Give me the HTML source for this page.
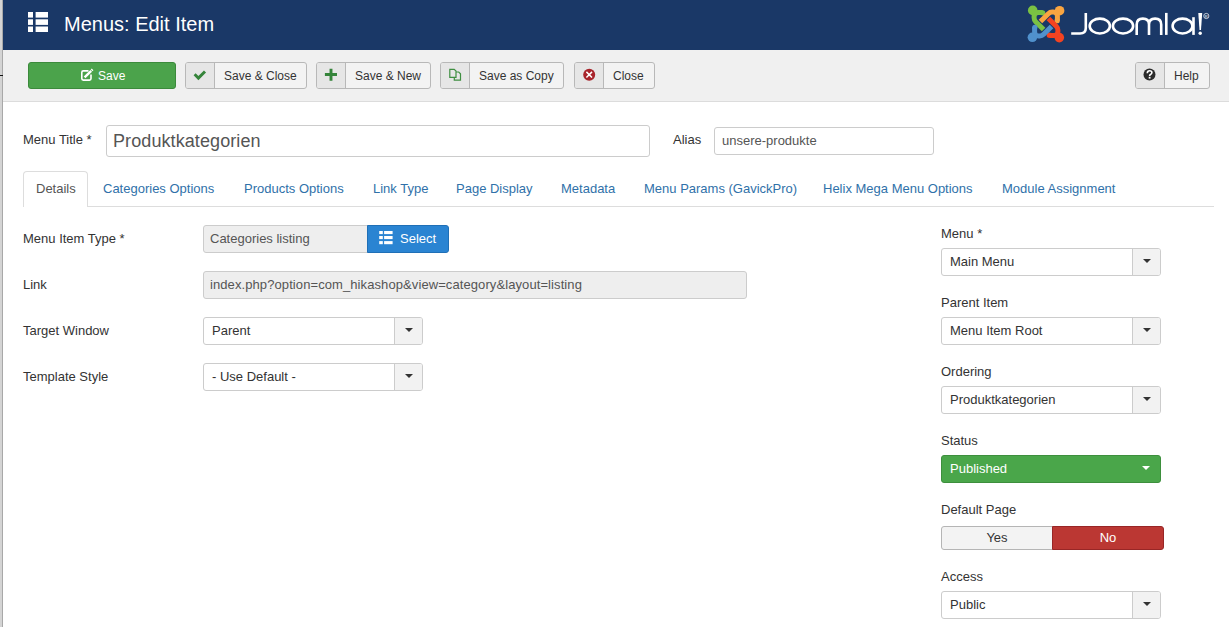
<!DOCTYPE html>
<html><head><meta charset="utf-8">
<style>
*{box-sizing:border-box;margin:0;padding:0}
html,body{width:1229px;height:627px;overflow:hidden;background:#fff;font-family:"Liberation Sans",sans-serif;color:#333}
.abs{position:absolute}
#lstrip{left:0;top:0;width:3px;height:627px;background:#d4d4d4;border-right:1px solid #a8a8a8}
#tick{left:0;top:75px;width:3px;height:1px;background:#111}
#hdr{left:3px;top:0;width:1226px;height:50px;background:#1a3867}
#hdr .title{left:61px;top:12px;font-size:20px;color:#fff;line-height:24px;white-space:nowrap}
#tb{left:3px;top:50px;width:1226px;height:52px;background:#f0f0f0;border-bottom:1px solid #dcdcdc}
.btn{position:absolute;top:62px;height:27px;border:1px solid #b8b8b8;border-radius:3px;background:#f3f3f3;font-size:12px;color:#333;line-height:25px;white-space:nowrap}
.btn .ic{position:absolute;left:0;top:0;bottom:0;width:29px;background:#e6e6e6;border-right:1px solid #b8b8b8;border-radius:2px 0 0 2px}
.btn .tx{position:absolute;top:1px}
.lbl{position:absolute;font-size:13px;color:#333;white-space:nowrap;line-height:16px}
.inp{position:absolute;border:1px solid #ccc;border-radius:3px;background:#fff;font-size:13px;color:#555;white-space:nowrap}
.sel .car{position:absolute;right:0;top:0;bottom:0;width:28px;background:#f2f2f2;border-left:1px solid #ccc;border-radius:0 2px 2px 0}
.car:after{content:"";position:absolute;left:10px;top:10px;border-left:4px solid transparent;border-right:4px solid transparent;border-top:4px solid #333}
.tab{position:absolute;top:181px;font-size:13px;color:#3071a9;white-space:nowrap;line-height:16px}
.car.w:after{border-top-color:#fff}
</style></head><body>
<div id="lstrip" class="abs"></div>
<div id="tick" class="abs"></div>
<div id="hdr" class="abs">
  <svg class="abs" style="left:25px;top:12px" width="20" height="20" viewBox="0 0 20 20">
    <rect x="0" y="0" width="5" height="5.6" fill="#fff"/><rect x="7.6" y="0" width="12.4" height="5.6" fill="#fff"/>
    <rect x="0" y="7.3" width="5" height="5.6" fill="#fff"/><rect x="7.6" y="7.3" width="12.4" height="5.6" fill="#fff"/>
    <rect x="0" y="14.5" width="5" height="5.6" fill="#fff"/><rect x="7.6" y="14.5" width="12.4" height="5.6" fill="#fff"/>
  </svg>
  <div class="title abs">Menus: Edit Item</div>
</div>
<div id="tb" class="abs"></div>

<!-- toolbar buttons -->
<div class="btn" style="left:28px;width:148px;background:#4ba34b;border-color:#3b8a3b;color:#fff">
  <svg class="abs" style="left:-1px;top:-1px" width="148" height="27" viewBox="0 0 148 27">
    <path d="M60.5,8.9 L55.3,8.9 Q53.8,8.9 53.8,10.4 L53.8,16.6 Q53.8,18.1 55.3,18.1 L61.5,18.1 Q63,18.1 63,16.6 L63,12.5" fill="none" stroke="#fff" stroke-width="1.6"/>
    <path d="M56.6,15.4 L63.2,8.8" stroke="#fff" stroke-width="2.4" stroke-linecap="butt"/>
    <path d="M63.6,8.4 L64.6,7.4" stroke="#fff" stroke-width="2.4"/>
  </svg>
  <span class="tx" style="left:69px;">Save</span>
</div>
<div class="btn" style="left:185px;width:122px"><span class="ic"></span>
  <svg class="abs" style="left:-1px;top:-1px" width="30" height="27" viewBox="0 0 30 27"><path d="M9.6,12.3 L13.4,16.1 L20,9.5" fill="none" stroke="#35843a" stroke-width="2.9"/></svg>
  <span class="tx" style="left:38px">Save &amp; Close</span></div>
<div class="btn" style="left:316px;width:115px"><span class="ic"></span>
  <svg class="abs" style="left:-1px;top:-1px" width="30" height="27" viewBox="0 0 30 27"><path d="M15,6.7 L15,18.8 M8.9,12.5 L21,12.5" fill="none" stroke="#35843a" stroke-width="2.9"/></svg>
  <span class="tx" style="left:38px">Save &amp; New</span></div>
<div class="btn" style="left:440px;width:124px"><span class="ic"></span>
  <svg class="abs" style="left:-1px;top:-1px" width="30" height="27" viewBox="0 0 30 27"><g fill="none" stroke="#3f8f41" stroke-width="1.2">
    <path d="M9.8,7.3 L14.2,7.3 L16,9.1 L16,15.3 L9.8,15.3 Z"/>
    <path d="M16,10 L18.7,10 L20.5,11.8 L20.5,18.2 L14.3,18.2 L14.3,15.3"/></g></svg>
  <span class="tx" style="left:38px">Save as Copy</span></div>
<div class="btn" style="left:574px;width:81px"><span class="ic"></span>
  <svg class="abs" style="left:-1px;top:-1px" width="30" height="27" viewBox="0 0 30 27"><circle cx="15.2" cy="12.7" r="6" fill="#a8242b"/><path d="M12.4,9.9 L18,15.5 M18,9.9 L12.4,15.5" stroke="#fff" stroke-width="1.5"/></svg>
  <span class="tx" style="left:38px">Close</span></div>
<div class="btn" style="left:1135px;width:75px"><span class="ic"></span>
  <svg class="abs" style="left:-1px;top:-1px" width="30" height="27" viewBox="0 0 30 27"><circle cx="14.5" cy="12.5" r="6" fill="#2b2b2b"/><path d="M12.3,11.2 Q12.3,8.7 14.6,8.7 Q16.9,8.7 16.9,10.6 Q16.9,11.9 15.5,12.5 Q14.6,12.9 14.6,14" fill="none" stroke="#fff" stroke-width="1.6"/><rect x="13.7" y="14.8" width="1.8" height="1.8" fill="#fff"/></svg>
  <span class="tx" style="left:38px">Help</span></div>

<!-- title row -->
<div class="lbl" style="left:23px;top:132px">Menu Title *</div>
<div class="inp" style="left:106px;top:125px;width:544px;height:32px;font-size:18px;line-height:30px;padding-left:6px;letter-spacing:0.09px">Produktkategorien</div>
<div class="lbl" style="left:673px;top:132px">Alias</div>
<div class="inp" style="left:714px;top:127px;width:220px;height:28px;line-height:26px;padding-left:7px">unsere-produkte</div>

<!-- tabs -->
<div class="abs" style="left:23px;top:206px;width:1191px;height:1px;background:#ddd"></div>
<div class="abs" style="left:23px;top:171px;width:65px;height:36px;border:1px solid #ddd;border-bottom:0;border-radius:4px 4px 0 0;background:#fff"></div>
<div class="tab" style="left:36px;color:#555">Details</div>
<div class="tab" style="left:103px">Categories Options</div>
<div class="tab" style="left:244px">Products Options</div>
<div class="tab" style="left:373px">Link Type</div>
<div class="tab" style="left:456px">Page Display</div>
<div class="tab" style="left:561px">Metadata</div>
<div class="tab" style="left:644px">Menu Params (GavickPro)</div>
<div class="tab" style="left:823px">Helix Mega Menu Options</div>
<div class="tab" style="left:1002px">Module Assignment</div>

<!-- left form -->
<div class="lbl" style="left:23px;top:231px">Menu Item Type *</div>
<div class="inp" style="left:203px;top:225px;width:165px;height:28px;line-height:26px;padding-left:6px;background:#eee;border-radius:3px 0 0 3px">Categories listing</div>
<div class="abs" style="left:367px;top:225px;width:82px;height:28px;background:#2a84d2;border:1px solid #1f6fb6;border-radius:0 3px 3px 0;color:#fff;font-size:13px;line-height:26px;padding-left:32px"><svg class="abs" style="left:11px;top:4.8px" width="14" height="14" viewBox="0 0 14 14"><g fill="#fff"><rect x="0.2" y="0" width="3.6" height="3.1"/><rect x="5.1" y="0" width="8.5" height="3.1"/><rect x="0.2" y="5" width="3.6" height="3.1"/><rect x="5.1" y="5" width="8.5" height="3.1"/><rect x="0.2" y="10.1" width="3.6" height="3.1"/><rect x="5.1" y="10.1" width="8.5" height="3.1"/></g></svg>Select</div>

<div class="lbl" style="left:23px;top:277px">Link</div>
<div class="inp" style="left:203px;top:271px;width:544px;height:28px;line-height:26px;padding-left:6px;background:#eee;letter-spacing:0.09px">index.php?option=com_hikashop&amp;view=category&amp;layout=listing</div>

<div class="lbl" style="left:23px;top:323px">Target Window</div>
<div class="inp sel" style="left:203px;top:317px;width:220px;height:28px;line-height:26px;padding-left:8px;color:#333">Parent<span class="car"></span></div>

<div class="lbl" style="left:23px;top:369px">Template Style</div>
<div class="inp sel" style="left:203px;top:363px;width:220px;height:28px;line-height:26px;padding-left:8px;color:#333">- Use Default -<span class="car"></span></div>

<!-- right column -->
<div class="lbl" style="left:941px;top:226px">Menu *</div>
<div class="inp sel" style="left:941px;top:248px;width:220px;height:28px;line-height:26px;padding-left:8px;color:#333">Main Menu<span class="car"></span></div>
<div class="lbl" style="left:941px;top:295px">Parent Item</div>
<div class="inp sel" style="left:941px;top:317px;width:220px;height:28px;line-height:26px;padding-left:8px;color:#333">Menu Item Root<span class="car"></span></div>
<div class="lbl" style="left:941px;top:364px">Ordering</div>
<div class="inp sel" style="left:941px;top:386px;width:220px;height:28px;line-height:26px;padding-left:8px;color:#333">Produktkategorien<span class="car"></span></div>
<div class="lbl" style="left:941px;top:433px">Status</div>
<div class="inp" style="left:941px;top:455px;width:220px;height:28px;line-height:26px;padding-left:8px;color:#fff;background:#4aa64a;border-color:#3d8f3d">Published<span class="car w" style="position:absolute;right:0;top:0;bottom:0;width:28px"></span></div>
<div class="lbl" style="left:941px;top:502px">Default Page</div>
<div class="abs" style="left:941px;top:526px;width:112px;height:24px;border:1px solid #b5b5b5;border-radius:3px 0 0 3px;background:#f3f3f3;font-size:13px;line-height:22px;text-align:center;color:#333">Yes</div>
<div class="abs" style="left:1052px;top:526px;width:112px;height:24px;border:1px solid #982626;border-radius:0 3px 3px 0;background:#bb3733;font-size:13px;line-height:22px;text-align:center;color:#fff">No</div>
<div class="lbl" style="left:941px;top:569px">Access</div>
<div class="inp sel" style="left:941px;top:591px;width:220px;height:28px;line-height:26px;padding-left:8px;color:#333">Public<span class="car"></span></div>

<!-- joomla logo -->
<svg class="abs" style="left:0;top:0" width="1229" height="50" viewBox="0 0 1229 50">
  <g transform="translate(1046,24)">
    <g fill="#7ac143" stroke="#7ac143"><circle cx="-13.3" cy="-13.6" r="4.8" stroke="none"/><path d="M-3.3,-11.4 L-7.9,-11.4 Q-11.9,-11.4 -11.9,-7.4 L-11.9,-6.2 Q-11.9,-3.95 -10.3,-2.35 L-2.4,5.55" fill="none" stroke-width="5" stroke-linecap="butt"/><circle cx="-3.3" cy="-11.2" r="2.6" stroke="none"/></g>
    <g fill="#f9a541" stroke="#f9a541" transform="rotate(90)"><circle cx="-13.3" cy="-13.6" r="4.8" stroke="none"/><path d="M-3.3,-11.4 L-7.9,-11.4 Q-11.9,-11.4 -11.9,-7.4 L-11.9,-6.2 Q-11.9,-3.95 -10.3,-2.35 L-2.4,5.55" fill="none" stroke-width="5" stroke-linecap="butt"/><circle cx="-3.3" cy="-11.2" r="2.6" stroke="none"/></g>
    <g fill="#f44321" stroke="#f44321" transform="rotate(180)"><circle cx="-13.3" cy="-13.6" r="4.8" stroke="none"/><path d="M-3.3,-11.4 L-7.9,-11.4 Q-11.9,-11.4 -11.9,-7.4 L-11.9,-6.2 Q-11.9,-3.95 -10.3,-2.35 L-2.4,5.55" fill="none" stroke-width="5" stroke-linecap="butt"/><circle cx="-3.3" cy="-11.2" r="2.6" stroke="none"/></g>
    <g fill="#5091cd" stroke="#5091cd" transform="rotate(270)"><circle cx="-13.3" cy="-13.6" r="4.8" stroke="none"/><path d="M-3.3,-11.4 L-7.9,-11.4 Q-11.9,-11.4 -11.9,-7.4 L-11.9,-6.2 Q-11.9,-3.95 -10.3,-2.35 L-2.4,5.55" fill="none" stroke-width="5" stroke-linecap="butt"/><circle cx="-3.3" cy="-11.2" r="2.6" stroke="none"/></g>
  </g>
  <g fill="none" stroke="#fff" stroke-width="2.6">
    <path d="M1085.8,12.9 L1085.8,28 Q1085.8,33.5 1080,33.5 L1071.2,33.5"/>
    <ellipse cx="1099.8" cy="26.05" rx="10.1" ry="7.4"/>
    <ellipse cx="1123" cy="26.05" rx="10.1" ry="7.4"/>
    <path d="M1136.7,34.9 L1136.7,24.5 Q1136.7,18.6 1142.85,18.6 Q1149,18.6 1149,24.5 L1149,34.9 M1149,24.5 Q1149,18.6 1155.1,18.6 Q1161.2,18.6 1161.2,24.5 L1161.2,34.9"/>
    <path d="M1166.3,12.9 L1166.3,34.9"/>
    <ellipse cx="1182.5" cy="26.05" rx="9.9" ry="7.4"/>
    <path d="M1193.5,17.2 L1193.5,34.9"/>
  </g>
  <path d="M1198.3,12.9 L1202.2,12.9 L1201,30 L1199.5,30 Z" fill="#fff"/>
  <circle cx="1200.2" cy="33.2" r="1.7" fill="#fff"/>
  <circle cx="1206.3" cy="16" r="2.6" fill="none" stroke="#fff" stroke-width="0.7"/>
  <text x="1206.3" y="17.6" font-size="4" fill="#fff" text-anchor="middle" font-family="Liberation Sans">R</text>
</svg>
</body></html>
